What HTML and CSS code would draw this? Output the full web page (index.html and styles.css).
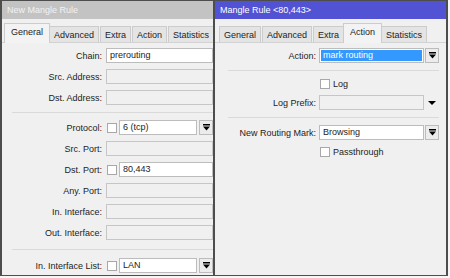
FILE: index.html
```html
<!DOCTYPE html>
<html lang="en">
<head>
    <meta charset="UTF-8">
    <title>Mangle Rule</title>
    <link rel="stylesheet" href="styles.css">
</head>
<body>
    <div class="desk">
        <section class="win win-left">
            <header class="title title-off">New Mangle Rule</header>
            <nav class="tabs">
                <span class="tab active">General</span>
                <span class="tab">Advanced</span>
                <span class="tab">Extra</span>
                <span class="tab">Action</span>
                <span class="tab">Statistics</span>
            </nav>
            <div class="form form-left">
                <div class="row"><label>Chain:</label><div class="field"><span class="box">prerouting</span></div></div>
                <div class="row"><label>Src. Address:</label><div class="field"><span class="box off"></span></div></div>
                <div class="row"><label>Dst. Address:</label><div class="field"><span class="box off"></span></div></div>
                <div class="sep"></div>
                <div class="row"><label>Protocol:</label><div class="field"><span class="chk"></span><span class="box">6 (tcp)</span><span class="drop"><svg width="7" height="7" viewBox="0 0 7 7"><rect x="0" y="0" width="7" height="1.5" fill="#000"/><polygon points="0,2.5 7,2.5 3.5,6.5" fill="#000"/></svg></span></div></div>
                <div class="row"><label>Src. Port:</label><div class="field"><span class="box off"></span></div></div>
                <div class="row"><label>Dst. Port:</label><div class="field"><span class="chk"></span><span class="box">80,443</span></div></div>
                <div class="row"><label>Any. Port:</label><div class="field"><span class="box off"></span></div></div>
                <div class="row"><label>In. Interface:</label><div class="field"><span class="box off"></span></div></div>
                <div class="row"><label>Out. Interface:</label><div class="field"><span class="box off"></span></div></div>
                <div class="sep sep-wide"></div>
                <div class="row"><label>In. Interface List:</label><div class="field"><span class="chk"></span><span class="box">LAN</span><span class="drop"><svg width="7" height="7" viewBox="0 0 7 7"><rect x="0" y="0" width="7" height="1.5" fill="#000"/><polygon points="0,2.5 7,2.5 3.5,6.5" fill="#000"/></svg></span></div></div>
            </div>
        </section>

        <section class="win win-right">
            <header class="title title-on">Mangle Rule &lt;80,443&gt;</header>
            <nav class="tabs">
                <span class="tab">General</span>
                <span class="tab">Advanced</span>
                <span class="tab">Extra</span>
                <span class="tab active">Action</span>
                <span class="tab">Statistics</span>
            </nav>
            <div class="form form-right">
                <div class="row"><label>Action:</label><div class="field"><span class="box picked"><span class="sel">mark routing</span></span><span class="drop"><svg width="7" height="7" viewBox="0 0 7 7"><rect x="0" y="0" width="7" height="1.5" fill="#000"/><polygon points="0,2.5 7,2.5 3.5,6.5" fill="#000"/></svg></span></div></div>
                <div class="sep"></div>
                <div class="row row-chk"><label></label><div class="field"><span class="chk"></span><span class="chk-text">Log</span></div></div>
                <div class="row"><label>Log Prefix:</label><div class="field"><span class="box off"></span><span class="tri"><svg width="8" height="4" viewBox="0 0 8 4"><polygon points="0,0 8,0 4,4" fill="#000"/></svg></span></div></div>
                <div class="sep"></div>
                <div class="row"><label>New Routing Mark:</label><div class="field"><span class="box">Browsing</span><span class="drop"><svg width="7" height="7" viewBox="0 0 7 7"><rect x="0" y="0" width="7" height="1.5" fill="#000"/><polygon points="0,2.5 7,2.5 3.5,6.5" fill="#000"/></svg></span></div></div>
                <div class="row row-chk"><label></label><div class="field"><span class="chk"></span><span class="chk-text">Passthrough</span></div></div>
            </div>
        </section>
    </div>
</body>
</html>
```

FILE: styles.css
```css
body {
    margin: 0;
    padding: 0;
    background-color: #f6f6f6;
    font-family: "Liberation Sans", Arial, sans-serif;
    font-size: 9px;
    color: #1c1c1c;
}

.desk {
    display: flex;
    width: 448px;
    height: 276px;
}

.win {
    display: flex;
    flex-direction: column;
    box-sizing: border-box;
    height: 276px;
    background: #f0f0f0;
    border: 1px solid #4d4d4d;
    overflow: hidden;
}

.win-left {
    width: 213px;
    border-left-width: 2px;
    border-right: none;
}

.win-right {
    flex: 1;
    border-left-width: 2px;
    border-right-width: 2px;
}

.title {
    height: 18px;
    line-height: 18px;
    padding-left: 5px;
    white-space: nowrap;
}

.title-off {
    background: #c3c3c3;
    color: #f2f2f2;
}

.title-on {
    background: #5252d4;
    color: #fff;
}

.tabs {
    display: flex;
    align-items: flex-end;
    height: 23px;
    padding-left: 4px;
    border-bottom: 1px solid #d2d2d2;
}

.tab {
    height: 16px;
    line-height: 16px;
    padding: 0 4px;
    margin-right: 1px;
    box-sizing: border-box;
    background: #e4e4e4;
    border: 1px solid #cccccc;
    border-bottom: none;
    white-space: nowrap;
}

.tab.active {
    height: 20px;
    line-height: 17px;
    margin: 0 -1px -1px -2px;
    padding: 0 6px;
    background: #f3f3f3;
    position: relative;
}

.form {
    display: flex;
    flex-direction: column;
    gap: 6px;
    padding-top: 5px;
}

.form-right {
    padding-right: 7px;
}

.row {
    display: grid;
    grid-template-columns: 100px 1fr;
    column-gap: 4px;
    height: 15px;
    align-items: center;
}

.form-right .row {
    grid-template-columns: 101px 1fr;
    column-gap: 3px;
}

.row-chk {
    height: 11px;
}

label {
    text-align: right;
    white-space: nowrap;
}

.field {
    display: flex;
    align-items: center;
    height: 100%;
}

.box {
    flex: 1;
    height: 15px;
    line-height: 13px;
    padding: 0 3px;
    box-sizing: border-box;
    background: #fff;
    border: 1px solid #bcbcbc;
    white-space: nowrap;
    overflow: hidden;
}

.box.off {
    background: #f0f0f0;
    border-color: #c6c6c6;
}

.box.picked {
    padding: 1px;
}

.sel {
    display: block;
    height: 11px;
    line-height: 11px;
    padding: 0 2px;
    background: #3399ff;
    color: #fff;
}

.chk {
    width: 10px;
    height: 10px;
    box-sizing: border-box;
    margin: 0 2px 0 1px;
    background: #fff;
    border: 1px solid #a8a8a8;
    flex: none;
}

.chk-text {
    margin-left: 1px;
}

.drop {
    display: flex;
    align-items: center;
    justify-content: center;
    width: 14px;
    height: 15px;
    margin-left: 2px;
    box-sizing: border-box;
    background: #ececec;
    border: 1px solid #bcbcbc;
    flex: none;
}

.form-right .drop {
    margin-left: 1px;
}

.tri {
    display: flex;
    align-items: center;
    justify-content: center;
    width: 15px;
    height: 15px;
    flex: none;
}

.sep {
    height: 1px;
    margin: 1px 0 1px 10px;
    background: #dadada;
}

.sep-wide {
    margin: 3px 0 2px 10px;
}

.form-right .sep {
    margin-left: 13px;
}
```
